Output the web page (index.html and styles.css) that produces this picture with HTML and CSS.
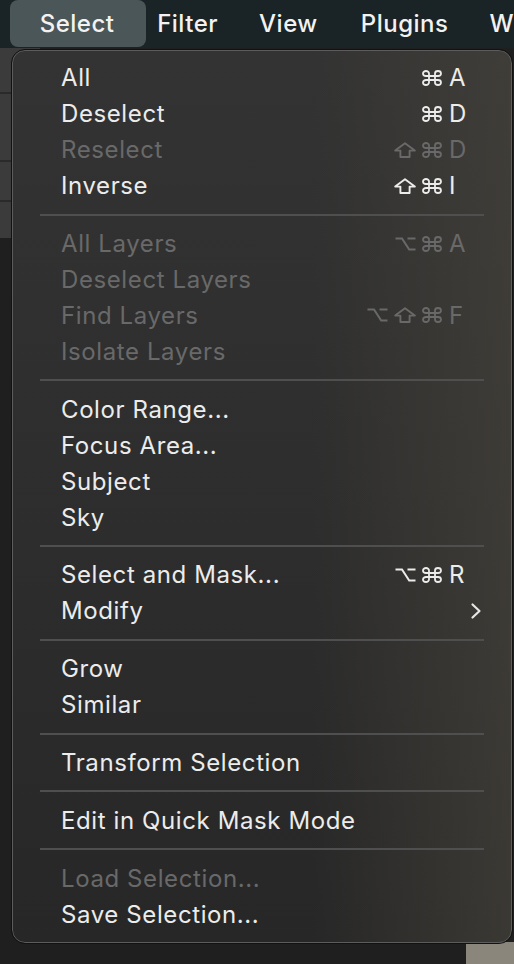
FILE: index.html
```html
<!DOCTYPE html>
<html>
<head>
<meta charset="utf-8">
<link rel="stylesheet" href="styles.css">
</head>
<body>
<svg width="0" height="0" class="defs">
  <defs>
    <symbol id="cmd" viewBox="0 0 20 16"><path d="M13 3.5V12.5A3 2.5 0 1 0 16 10H4A3 2.5 0 1 0 7 12.5V3.5A3 2.5 0 1 0 4 6H16A3 2.5 0 1 0 13 3.5" fill="none" stroke="currentColor" stroke-width="1.8"/></symbol>
    <symbol id="shift" viewBox="0 0 22 16"><path d="M11 1.2 L20.8 8.6 H15.6 V15 H6.4 V8.6 H1.2 Z" fill="none" stroke="currentColor" stroke-width="1.9" stroke-linejoin="round"/></symbol>
    <symbol id="opt" viewBox="0 0 21 16"><path d="M0.5 2.5H7L14.2 13.5H20.5M12.5 2.5H20.5" fill="none" stroke="currentColor" stroke-width="2"/></symbol>
  </defs>
</svg>
<div class="menubar">
  <div class="mb-item active">Select</div>
  <div class="mb-item m-filter">Filter</div>
  <div class="mb-item m-view">View</div>
  <div class="mb-item m-plugins">Plugins</div>
  <div class="mb-item m-w">W</div>
</div>
<div class="workspace">
  <div class="panel">
    <div class="prow r1"></div>
    <div class="prow r2"></div>
    <div class="prow r3"></div>
    <div class="prow r4"></div>
  </div>
  <div class="canvas"></div>
  <div class="photo"></div>
</div>

<div class="menu">
  <div class="item"><span class="label">All</span><span class="keys"><svg class="k-cmd"><use href="#cmd"/></svg><span class="key">A</span></span></div>
  <div class="item"><span class="label">Deselect</span><span class="keys"><svg class="k-cmd"><use href="#cmd"/></svg><span class="key">D</span></span></div>
  <div class="item disabled"><span class="label">Reselect</span><span class="keys"><svg class="k-shift"><use href="#shift"/></svg><svg class="k-cmd"><use href="#cmd"/></svg><span class="key">D</span></span></div>
  <div class="item"><span class="label">Inverse</span><span class="keys"><svg class="k-shift"><use href="#shift"/></svg><svg class="k-cmd"><use href="#cmd"/></svg><span class="key">I</span></span></div>
  <div class="sep"></div>
  <div class="item disabled"><span class="label">All Layers</span><span class="keys"><svg class="k-opt"><use href="#opt"/></svg><svg class="k-cmd"><use href="#cmd"/></svg><span class="key">A</span></span></div>
  <div class="item disabled"><span class="label">Deselect Layers</span></div>
  <div class="item disabled"><span class="label">Find Layers</span><span class="keys"><svg class="k-opt"><use href="#opt"/></svg><svg class="k-shift"><use href="#shift"/></svg><svg class="k-cmd"><use href="#cmd"/></svg><span class="key">F</span></span></div>
  <div class="item disabled"><span class="label">Isolate Layers</span></div>
  <div class="sep"></div>
  <div class="item"><span class="label">Color Range...</span></div>
  <div class="item"><span class="label">Focus Area...</span></div>
  <div class="item"><span class="label">Subject</span></div>
  <div class="item"><span class="label">Sky</span></div>
  <div class="sep"></div>
  <div class="item"><span class="label">Select and Mask...</span><span class="keys"><svg class="k-opt"><use href="#opt"/></svg><svg class="k-cmd"><use href="#cmd"/></svg><span class="key">R</span></span></div>
  <div class="item"><span class="label">Modify</span><svg class="chev" width="12" height="18" viewBox="0 0 12 18"><polyline points="2.5,2.5 9.5,9 2.5,15.5" fill="none" stroke="#e6e6e6" stroke-width="2.2" stroke-linecap="round" stroke-linejoin="round"/></svg></div>
  <div class="sep"></div>
  <div class="item"><span class="label">Grow</span></div>
  <div class="item"><span class="label">Similar</span></div>
  <div class="sep"></div>
  <div class="item"><span class="label">Transform Selection</span></div>
  <div class="sep"></div>
  <div class="item"><span class="label">Edit in Quick Mask Mode</span></div>
  <div class="sep"></div>
  <div class="item disabled"><span class="label">Load Selection...</span></div>
  <div class="item"><span class="label">Save Selection...</span></div>
</div>
</body>
</html>
```

FILE: styles.css
```css
html, body {
  margin: 0;
  padding: 0;
}
body {
  width: 514px;
  height: 964px;
  overflow: hidden;
  background: #1f1f1f;
  font-family: "Inter", "Noto Sans", "DejaVu Sans", sans-serif;
  position: relative;
}
.defs {
  position: absolute;
  width: 0;
  height: 0;
}
.menubar {
  height: 48px;
  background: #1a2326;
  display: flex;
  align-items: stretch;
  padding-left: 10px;
  box-sizing: border-box;
}
.mb-item {
  color: #f2f2f2;
  font-size: 24px;
  font-weight: 500;
  display: flex;
  align-items: center;
  letter-spacing: 0.5px;
  padding-bottom: 1px;
}
.mb-item.active {
  background: #4a5658;
  border-radius: 8px;
  width: 138px;
  height: 47px;
  justify-content: center;
  padding-right: 2px;
  box-sizing: border-box;
}
.m-filter { padding-left: 11px; }
.m-view { padding-left: 41px; }
.m-plugins { padding-left: 43px; }
.m-w { padding-left: 41px; }

.workspace {
  height: 916px;
  position: relative;
  display: flex;
}
.panel {
  width: 40px;
  display: flex;
  flex-direction: column;
}
.prow {
  background: #3b3b3b;
  border-bottom: 2px solid #2a2a2a;
}
.r1 { height: 44px; }
.r2 { height: 66px; }
.r3 { height: 38px; }
.r4 { height: 36px; border-bottom: none; }
.canvas { flex: 1; }
.photo {
  position: absolute;
  right: 0;
  bottom: 0;
  width: 48px;
  height: 22px;
  background: #8b867b;
}

.menu {
  position: absolute;
  top: 50px;
  left: 12px;
  width: 500px;
  height: 893px;
  box-sizing: border-box;
  border: 1px solid #5c5c5c;
  outline: 1px solid #121212;
  border-radius: 13px;
  padding: 9px 0 10px;
  background:
    linear-gradient(90deg, rgba(0,0,0,0) 60%, rgba(72,68,60,0.6) 100%),
    linear-gradient(180deg, #333333 0%, #2d2d2d 55%, #272727 100%);
  display: flex;
  flex-direction: column;
}
.item {
  height: 36px;
  display: flex;
  align-items: center;
  justify-content: space-between;
  padding: 0 45px 0 48px;
  color: #ececec;
  font-size: 24px;
  letter-spacing: 0.6px;
}
.item.disabled {
  color: #696969;
}
.keys {
  display: flex;
  align-items: center;
  gap: 6px;
}
.key {
  letter-spacing: 0;
  margin-left: 1px;
  width: 17px;
  text-align: left;
}
.k-cmd {
  width: 20px;
  height: 16px;
}
.k-shift {
  width: 22px;
  height: 16px;
}
.k-opt {
  width: 21px;
  height: 16px;
}
.chev {
  margin-right: -16px;
}
.sep {
  height: 22px;
  display: flex;
  align-items: center;
  padding: 0 27px;
}
.sep::before {
  content: "";
  flex: 1;
  height: 2px;
  background: #4f4f4f;
}
```
